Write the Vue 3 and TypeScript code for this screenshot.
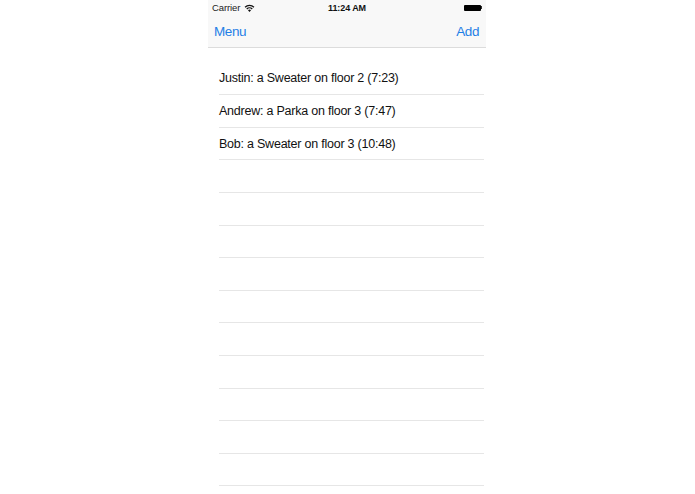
<script setup lang="ts">
const rows: string[] = [
  'Justin: a Sweater on floor 2 (7:23)',
  'Andrew: a Parka on floor 3 (7:47)',
  'Bob: a Sweater on floor 3 (10:48)',
  '', '', '', '', '', '', '', '', '', '',
]
</script>

<template>
  <div class="page">
    <div class="phone">
      <header class="bar">
        <div class="status">
          <div class="status-left">
            <span class="carrier">Carrier</span>
            <svg class="wifi" width="11" height="8" viewBox="0 0 11 8">
              <path d="M0.6 2.8 A7 7 0 0 1 10.4 2.8 L9.5 3.7 A5.7 5.7 0 0 0 1.5 3.7 Z" fill="#111" />
              <path d="M2.3 4.5 A4.6 4.6 0 0 1 8.7 4.5 L7.8 5.4 A3.3 3.3 0 0 0 3.2 5.4 Z" fill="#111" />
              <path d="M5.5 8 L4 6.3 A2.1 2.1 0 0 1 7 6.3 Z" fill="#111" />
            </svg>
          </div>
          <span class="time">11:24 AM</span>
          <div class="status-right">
            <span class="battery"></span>
            <span class="nub"></span>
          </div>
        </div>
        <nav class="nav">
          <span class="action">Menu</span>
          <span class="action">Add</span>
        </nav>
      </header>
      <ul class="list">
        <li v-for="(row, i) in rows" :key="i" class="row">{{ row }}</li>
      </ul>
    </div>
  </div>
</template>

<style scoped>
.page {
  width: 695px;
  height: 494px;
  background: #fff;
  overflow: hidden;
  display: flex;
  justify-content: center;
  font-family: "Liberation Sans", Arial, sans-serif;
}
.phone {
  width: 278px;
  margin-left: -1px;
  display: flex;
  flex-direction: column;
}
.bar {
  height: 48px;
  background: #f8f8f8;
  border-bottom: 1px solid #dcdcdc;
  box-sizing: border-box;
  flex: none;
}
.status {
  height: 15px;
  display: grid;
  grid-template-columns: 1fr auto 1fr;
  align-items: center;
  padding: 0 4px;
  color: #111;
  font-size: 9.5px;
}
.status-left {
  display: flex;
  align-items: center;
  gap: 4px;
}
.carrier {
  color: #222;
  letter-spacing: -0.1px;
}
.wifi {
  display: block;
}
.time {
  font-weight: 700;
  font-size: 9px;
  letter-spacing: -0.1px;
}
.status-right {
  display: flex;
  align-items: center;
  justify-content: flex-end;
}
.battery {
  width: 17px;
  height: 6px;
  background: #000;
  border-radius: 1px;
}
.nub {
  width: 1px;
  height: 3px;
  background: #333;
}
.nav {
  height: 32px;
  display: flex;
  align-items: center;
  justify-content: space-between;
  padding: 0 7px 0 6px;
  color: #1f7fe6;
  font-size: 13.5px;
  letter-spacing: -0.4px;
}
.list {
  list-style: none;
  margin: 14.6px 0 0;
  padding: 0 2px 0 11px;
  color: #111;
  font-size: 12.5px;
  letter-spacing: -0.23px;
}
.row {
  height: 32.6px;
  box-sizing: border-box;
  border-bottom: 1px solid #e6e6e6;
  display: flex;
  align-items: center;
}
</style>

<style>
html,
body {
  margin: 0;
  background: #fff;
}
</style>
